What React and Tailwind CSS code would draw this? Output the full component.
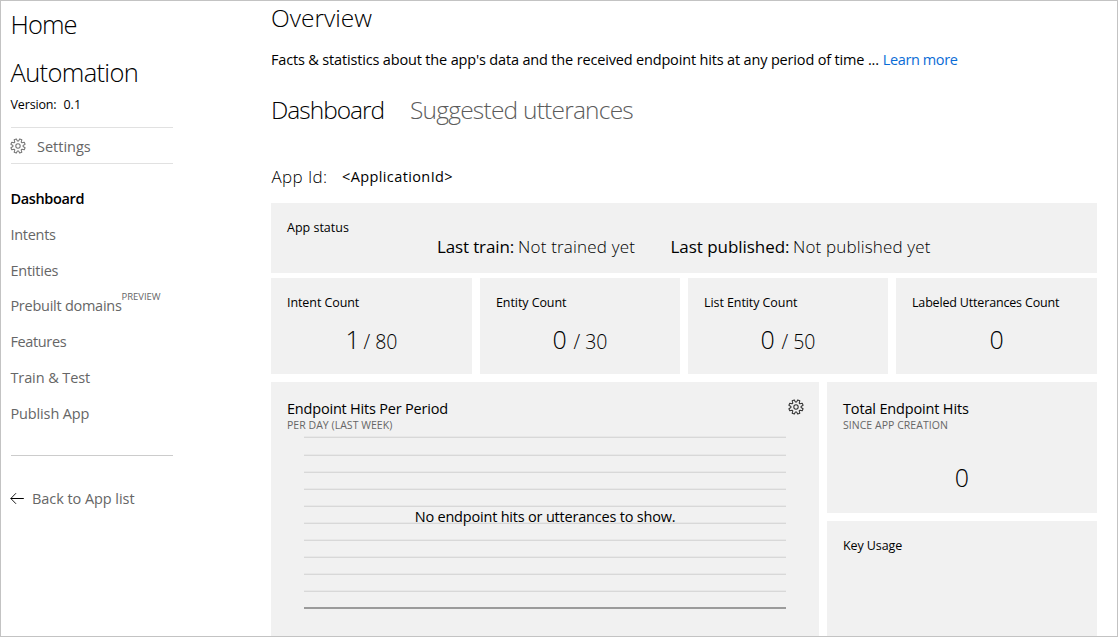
const TEETH = 8;

function gearPath(cx, cy, outer, inner) {
  const step = (Math.PI * 2) / TEETH;
  const pts = [];
  for (let i = 0; i < TEETH; i++) {
    const a = i * step + step / 2;
    [
      [a - step * 0.36, inner],
      [a - step * 0.2, outer],
      [a + step * 0.2, outer],
      [a + step * 0.36, inner],
    ].forEach(([t, r]) => pts.push(`${(cx + r * Math.sin(t)).toFixed(2)} ${(cy - r * Math.cos(t)).toFixed(2)}`));
  }
  return `M${pts.join("L")}Z`;
}

function Gear({ className }) {
  return (
    <svg viewBox="0 0 16 16" className={`size-4 shrink-0 ${className}`} fill="none" stroke="currentColor" strokeWidth="1.05" strokeLinejoin="round">
      <path d={gearPath(8, 8, 7.3, 5.1)} />
      <circle cx="8" cy="8" r="2.2" />
    </svg>
  );
}

function BackArrow() {
  return (
    <svg viewBox="0 0 14 12" className="-ml-px h-3 w-3.5 shrink-0" fill="none" stroke="#000">
      <path d="M0.8 6.5H13.8" strokeWidth="1" />
      <path d="M6 1.2L0.8 6.5L6 11.8" strokeWidth="0.9" />
    </svg>
  );
}

function Sidebar() {
  return (
    <aside className="w-[173px] shrink-0 pt-[5px] pl-2.5 text-[14.5px] text-[#666]">
      <h1 className="-ml-[0.5px] text-[25.5px]/9 font-light tracking-[-0.95px] text-black">Home</h1>
      <h2 className="mt-3 -ml-[0.5px] text-[25.5px]/9 font-light tracking-[-0.65px] text-black">Automation</h2>
      <p className="mt-[5px] -ml-[0.5px] flex gap-[7px] text-[12.5px]/5 text-black">
        <span className="tracking-[-0.15px]">Version:</span>
        <span>0.1</span>
      </p>
      <div className="mt-3 flex h-[37px] w-[162px] items-center border-y border-[#e1e1e1]">
        <Gear className="-ml-px text-[#777]" />
        <span className="ml-[11px] pt-0.5 leading-8">Settings</span>
      </div>
      <nav className="mt-[17px] -ml-[0.6px] leading-9 whitespace-nowrap">
        <div className="h-9 font-semibold tracking-[-0.35px] text-black">Dashboard</div>
        <div className="h-9 tracking-[-0.27px]">Intents</div>
        <div className="h-9 tracking-[-0.23px]">Entities</div>
        <div className="flex h-[35px] leading-[34px]">
          <span className="tracking-[-0.26px]">Prebuilt domains</span>
          <span className="text-[9.5px]/[15px] tracking-[-0.05px]">PREVIEW</span>
        </div>
        <div className="h-9 tracking-[-0.36px]">Features</div>
        <div className="h-9 tracking-[-0.09px]">Train &amp; Test</div>
        <div className="h-9 tracking-[-0.12px]">Publish App</div>
      </nav>
      <div className="mt-[23px] w-[162px] border-t border-[#ccc]" />
      <div className="mt-6 flex h-9 items-center leading-9 whitespace-nowrap">
        <BackArrow />
        <span className="ml-2 pt-0.5 leading-8 tracking-[-0.06px]">Back to App list</span>
      </div>
    </aside>
  );
}

function CountCard({ title, titleClass, gapClass = "gap-[7px]", value, limit }) {
  return (
    <div className="bg-[#f1f1f1] px-4 pt-[15px]">
      <h3 className={`text-[12.5px]/5 whitespace-nowrap ${titleClass}`}>{title}</h3>
      <p className={`mt-2 flex items-baseline justify-center leading-9 font-light ${gapClass}`}>
        <span className="text-[25px] tracking-[-0.3px]">{value}</span>
        {limit && <span className="text-[19.5px]">/ {limit}</span>}
      </p>
    </div>
  );
}

const GRID_LINES = [1, 19, 36, 53, 70, 87, 104, 121, 138, 155];

function HitsChart() {
  return (
    <div className="relative mt-[3px] ml-[17px] h-[173px] w-[482px]">
      <svg viewBox="0 0 482 173" className="block h-[173px] w-[482px]" shapeRendering="crispEdges">
        {GRID_LINES.map((y) => (
          <g key={y}>
            <rect x="0" y={y - 1} width="482" height="1" fill="#e8e8e8" />
            <rect x="0" y={y} width="482" height="1" fill="#d8d8d8" />
          </g>
        ))}
        <rect x="0" y="171" width="482" height="2" fill="#9b9b9b" />
      </svg>
      <p className="absolute inset-x-0 top-[69px] text-center text-[14.5px]/6 tracking-[-0.2px] whitespace-nowrap">
        No endpoint hits or utterances to show.
      </p>
    </div>
  );
}

function Main() {
  return (
    <main className="ml-[97px] flex w-[826px] shrink-0 flex-col text-black">
      <h2 className="-mt-px text-[24.5px]/9 font-light">Overview</h2>
      <p className="mt-3 flex gap-1 text-[14.5px]/6 whitespace-nowrap">
        <span className="tracking-[-0.165px]">
          Facts &amp; statistics about the app's data and the received endpoint hits at any period of time ...
        </span>
        <a className="tracking-[-0.4px] text-[#0a6cd6]">Learn more</a>
      </p>
      <div className="mt-5 flex text-[24.5px]/9 font-light whitespace-nowrap">
        <span className="w-[139px] tracking-[-1px]">Dashboard</span>
        <span className="tracking-[-0.78px] text-[#5c5c5c]">Suggested utterances</span>
      </div>
      <div className="mt-[31px] flex h-9 items-center">
        <span className="w-[71px] pl-[0.5px] text-[17px]/8 font-light tracking-[0.38px]">App Id:</span>
        <span className="text-[14.5px]/8 tracking-[0.39px]">&lt;ApplicationId&gt;</span>
      </div>

      <section className="mt-2 h-[70px] bg-[#f1f1f1] px-4 pt-[15px]">
        <h3 className="h-[17px] text-[12.5px]/5">App status</h3>
        <p className="ml-[150px] flex text-[17px]/6 whitespace-nowrap">
          <span className="w-[81px] tracking-[-0.14px]">Last train:</span>
          <span className="w-[152.5px] font-light tracking-[0.2px]">Not trained yet</span>
          <span className="w-[122.5px] tracking-[-0.04px]">Last published:</span>
          <span className="font-light tracking-[0.16px]">Not published yet</span>
        </p>
      </section>

      <section className="mt-[5px] grid h-24 grid-cols-[201px_200px_200px_201px] gap-2">
        <CountCard title="Intent Count" titleClass="tracking-[-0.08px]" gapClass="gap-1" value="1" limit="80" />
        <CountCard title="Entity Count" titleClass="tracking-[-0.08px]" value="0" limit="30" />
        <CountCard title="List Entity Count" titleClass="tracking-[-0.08px]" value="0" limit="50" />
        <CountCard title="Labeled Utterances Count" titleClass="tracking-[-0.17px]" value="0" />
      </section>

      <section className="mt-2 flex flex-1 gap-2">
        <div className="w-[548px] bg-[#f1f1f1] px-4 pt-[17px]">
          <div className="flex justify-between">
            <div>
              <h3 className="h-[18px] text-[14.5px]/5 tracking-[-0.2px]">Endpoint Hits Per Period</h3>
              <p className="text-[10.5px]/4 tracking-[0.04px] text-[#666]">PER DAY (LAST WEEK)</p>
            </div>
            <Gear className="-mr-[0.5px] text-[#333]" />
          </div>
          <HitsChart />
        </div>
        <div className="flex flex-1 flex-col gap-2">
          <div className="h-[131px] bg-[#f1f1f1] px-4 pt-[17px]">
            <h3 className="h-[18px] text-[14.5px]/5 tracking-[-0.16px]">Total Endpoint Hits</h3>
            <p className="text-[10.5px]/4 tracking-[0.04px] text-[#666]">SINCE APP CREATION</p>
            <p className="mt-[26px] text-center text-[25px]/9 font-light">0</p>
          </div>
          <div className="flex-1 bg-[#f1f1f1] px-4 pt-[15px]">
            <h3 className="text-[12.5px]/5 tracking-[-0.1px]">Key Usage</h3>
          </div>
        </div>
      </section>
    </main>
  );
}

export default function App() {
  return (
    <div className="flex h-[637px] w-[1118px] overflow-hidden border border-[#c3c3c3] bg-white font-['Open_Sans','Noto_Sans',sans-serif]">
      <Sidebar />
      <Main />
    </div>
  );
}
